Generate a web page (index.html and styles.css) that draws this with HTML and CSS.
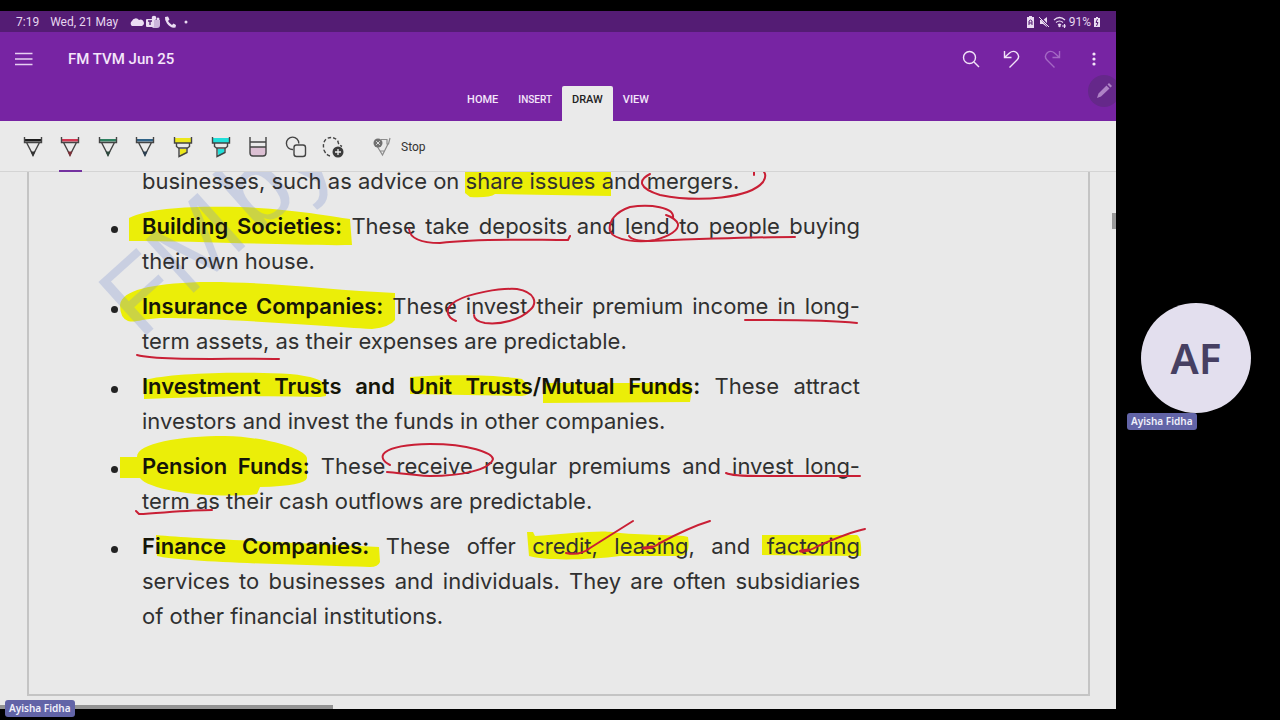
FILE: index.html
```html
<!DOCTYPE html>
<html lang="en">
<head>
<meta charset="utf-8">
<title>FM TVM Jun 25</title>
<link rel="stylesheet" href="styles.css">
</head>
<body>
<div class="meeting">
  <main class="share">
    <div class="status">
      <span>7:19</span><span class="date">Wed, 21 May</span>
      <svg class="status-left" viewBox="0 0 62 14" width="62" height="14" aria-hidden="true">
        <path d="M3 11a3 3 0 0 1 0-5 4 4 0 0 1 7-1 3 3 0 0 1 3 6Z" fill="#eadcf2"/>
        <circle cx="25" cy="3" r="2.3" fill="#eadcf2"/><circle cx="29" cy="4" r="1.5" fill="#eadcf2"/>
        <path d="M22 5h9v5a3 3 0 0 1-3 3h-4l-2-2Z" fill="#cdb6dc"/>
        <rect x="17" y="4" width="8" height="8" rx="1" fill="#eadcf2"/><path d="M19 6h4M21 6v4" stroke="#541c74" stroke-width="1.3"/>
        <path d="M36 2l3-.5 1.5 3-1.5 1.5q1.500 2.500 4 4l1.500-1.500 2.500 1.500-.5 2.500q-5 1-8.500-4Q35.500 5 36 2Z" fill="#eadcf2"/>
        <circle cx="57" cy="7" r="1.500" fill="#eadcf2"/>
      </svg>
      <span class="battery">
        <svg viewBox="0 0 42 14" width="42" height="14" aria-hidden="true">
          <path d="M2 2h2V1h3v1h2v11H2Z" fill="#eadcf2"/><path d="M4 10V6l1.500-1L7 6v4M4 8h3" stroke="#541c74" fill="none"/>
          <path d="M15 5h3l4-3v10l-4-3h-3Z" fill="#eadcf2"/><path d="M15 2l9 10" stroke="#541c74" stroke-width="2"/><path d="M14 2l10 10" stroke="#eadcf2"/>
          <g fill="none" stroke="#eadcf2" stroke-width="1.200"><path d="M29 5q5.500-5 11 0M31 7.500q3.500-3 7 0M33 10q1.500-1.500 3 0"/><path d="M37 11h4M39.500 9v4"/></g><circle cx="34.500" cy="11" r="1.200" fill="#eadcf2"/>
        </svg>
        <span>91%</span>
        <svg viewBox="0 0 8 12" width="8" height="12" aria-hidden="true"><path d="M1 2h2V1h2v1h2v9H1Z" fill="#eadcf2"/><path d="M4.500 3L3 6.500h2L3.500 10" stroke="#541c74" fill="none"/></svg>
      </span>
    </div>
    <header class="header">
      <div class="titlebar">
        <button class="icon-btn menu" aria-label="Menu"><svg viewBox="0 0 18 14" width="18" height="14"><path d="M0 1.500h17.500M0 7h17.500M0 12.500h17.500" stroke="#e7cff2" stroke-width="1.300"/></svg></button>
        <h1>FM TVM Jun 25</h1>
        <div class="actions">
          <button class="icon-btn" aria-label="Search"><svg viewBox="0 0 18 18" width="18" height="18"><g fill="none" stroke="#f2e4f8" stroke-width="1.400"><circle cx="7.500" cy="7.500" r="6"/><path d="M12 12l5 5"/></g></svg></button>
          <button class="icon-btn" aria-label="Undo"><svg viewBox="0 0 18 18" width="18" height="18"><path d="M1.500 1v6.500h7M1.500 7.500L6.500 3Q10 0 13.500 2.500q4 4 .5 7.500L6.500 17.500" fill="none" stroke="#f2e4f8" stroke-width="1.400"/></svg></button>
          <button class="icon-btn" aria-label="Redo" disabled><svg viewBox="0 0 18 18" width="18" height="18"><path d="M15.500 1v6.500h-7M15.500 7.500L10.500 3Q7 0 3.500 2.500q-4 4-.5 7.500l7.500 7.500" fill="none" stroke="#a468c4" stroke-width="1.400"/></svg></button>
          <button class="icon-btn" aria-label="More"><svg viewBox="0 0 18 18" width="18" height="18"><g fill="#f2e4f8"><circle cx="9" cy="4" r="1.600"/><circle cx="9" cy="9" r="1.600"/><circle cx="9" cy="14" r="1.600"/></g></svg></button>
        </div>
      </div>
      <nav class="tabs">
        <button>HOME</button><button class="small">INSERT</button><button class="active">DRAW</button><button>VIEW</button>
      </nav>
      <button class="float-pen" aria-label="Pen menu"><svg viewBox="0 0 18 18" width="18" height="18"><path d="M2 16l1.500-4.500L11.500 3.500l3 3L6 14.500ZM12.500 2.500L14 1l3 3-1.500 1.500Z" fill="#ae83c6"/></svg></button>
    </header>
    <div class="toolbar">
      <div class="tools">
        <button aria-label="Black pen"><svg class="tool" viewBox="0 0 20 22"><path d="M2 3h16v2.500H2Z" fill="#1c1c1c"/><g fill="none" stroke="#444" stroke-width="1.400"><path d="M1.500 1v5.500h17V1M3.500 6.500L10 19l6.500-12.500"/></g><path d="M7.500 15.500h5L10 21Z" fill="#333"/></svg></button>
        <button class="selected" aria-label="Red pen"><svg class="tool" viewBox="0 0 20 22"><path d="M2 3h16v2.500H2Z" fill="#d23852"/><g fill="none" stroke="#444" stroke-width="1.400"><path d="M1.500 1v5.500h17V1M3.500 6.500L10 19l6.500-12.500"/></g><path d="M7.500 15.500h5L10 21Z" fill="#7d3038"/></svg></button>
        <button aria-label="Green pen"><svg class="tool" viewBox="0 0 20 22"><path d="M2 3h16v2.500H2Z" fill="#2e8061"/><g fill="none" stroke="#444" stroke-width="1.400"><path d="M1.500 1v5.500h17V1M3.500 6.500L10 19l6.500-12.500"/></g><path d="M7.500 15.500h5L10 21Z" fill="#2d4a3e"/></svg></button>
        <button aria-label="Blue pen"><svg class="tool" viewBox="0 0 20 22"><path d="M2 3h16v2.500H2Z" fill="#2f6287"/><g fill="none" stroke="#444" stroke-width="1.400"><path d="M1.500 1v5.500h17V1M3.500 6.500L10 19l6.500-12.500"/></g><path d="M7.500 15.500h5L10 21Z" fill="#2c4052"/></svg></button>
        <button aria-label="Yellow highlighter"><svg class="tool" viewBox="0 0 20 22"><path d="M2 2h16v5H2ZM6.500 13h7v4l-6 3.500Z" fill="#ece71b"/><path d="M1.500 1v6h17V1M3.500 7v3.500l2 1.500h9l2-1.500V7M6 12v8.500l8-4V12" fill="none" stroke="#444" stroke-width="1.400"/></svg></button>
        <button aria-label="Cyan highlighter"><svg class="tool" viewBox="0 0 20 22"><path d="M2 2h16v5H2ZM6.500 13h7v4l-6 3.500Z" fill="#21dfd9"/><path d="M1.500 1v6h17V1M3.500 7v3.500l2 1.500h9l2-1.500V7M6 12v8.500l8-4V12" fill="none" stroke="#444" stroke-width="1.400"/></svg></button>
        <button aria-label="Eraser"><svg class="tool" viewBox="0 0 20 22"><path d="M2 11h16v6q0 3-3 3H5q-3 0-3-3Z" fill="#dcc0d3"/><path d="M2 1v16q0 3 3 3h10q3 0 3-3V1M2 6h16M2 11h16" fill="none" stroke="#444" stroke-width="1.400"/></svg></button>
        <button aria-label="Shapes"><svg class="tool" viewBox="0 0 20 22"><g fill="none" stroke="#444" stroke-width="1.400"><path d="M7 13.500A6.200 6.200 0 1 1 12.800 7.500"/><rect x="8" y="9" width="11.500" height="11.500" rx="2.500"/></g></svg></button>
        <button aria-label="Lasso select"><svg class="tool" viewBox="0 0 20 22"><path d="M7 20Q3 19 1 14-1 6 4 2.500q7-3 11 3 0 3 4 5" fill="none" stroke="#444" stroke-width="1.400" stroke-dasharray="3.500 2"/><circle cx="15" cy="16" r="5.500" fill="#3c3c3c"/><path d="M15 13v6M12 16h6" stroke="#eee" stroke-width="1.300"/></svg></button>
      </div>
      <button class="stop"><svg viewBox="0 0 18 20" width="18" height="20" aria-hidden="true"><path d="M8 2.500h6V7h1.500l1.500-6M4 9l5.500 9L15 7M7.500 14h4" fill="none" stroke="#8b8b8b" stroke-width="1.200"/><circle cx="5" cy="6" r="4.500" fill="#707070"/><path d="M3.200 4.200l3.600 3.600M6.800 4.200L3.200 7.800" stroke="#ddd"/></svg>Stop</button>
    </div>
    <section class="canvas">
      <article class="page">
        <svg class="ink" viewBox="27 172 1062 537" width="1062" height="537" aria-hidden="true">
          <g class="highlight">
            <path d="M129 218C150 207 200 206 240 207 290 209 330 216 350 219L352 245C300 246 200 241 129 241Z"/>
            <path d="M120 305C122 290 150 284 200 282 260 281 330 290 395 293V320Q390 327 372 329C320 326 220 318 160 318 140 319 136 323 128 321Q120 318 120 305Z"/>
            <path d="M465 172H611V196L495 194Q490 198 470 197L465 193Z"/>
            <path d="M144 380C170 373 240 371 290 374Q322 377 326 386V396L320 397C260 395 200 397 144 399Z"/>
            <path d="M410 377C450 374 500 375 522 379L532 390Q530 395 522 396L410 394Z"/>
            <path d="M543 383H688L692 388 690 402 543 403Z"/>
            <path d="M120 457H137C137 443 180 436 225 436 270 437 306 450 307 458V478Q305 486 260 487L257 494C220 499 150 492 140 478H120Z"/>
            <path d="M156 535C200 539 300 543 379 547L380 562Q378 567 370 567C300 565 180 562 157 556Z"/>
            <path d="M527 532H533L535 536C560 534 600 530 612 532 640 536 680 534 688 537Q691 555 680 556L620 556C590 560 545 561 529 556Z"/>
            <path d="M762 535H857Q862 538 861 556L762 555Z"/>
          </g>
          <g class="watermark" transform="translate(140 341) rotate(-42)"><text>FM</text><text x="158">by</text></g>
        </svg>
        <ul class="notes">
          <li class="cont"><span class="last">businesses, such as advice on share issues and mergers.</span></li>
          <li><span class="line"><b>Building Societies:</b> These take deposits and lend to people buying</span> <span class="last">their own house.</span></li>
          <li><span class="line"><b>Insurance Companies:</b> These invest their premium income in long-</span><span class="last">term assets, as their expenses are predictable.</span></li>
          <li><span class="line"><b>Investment Trusts and Unit Trusts/Mutual Funds:</b> These attract</span> <span class="last">investors and invest the funds in other companies.</span></li>
          <li><span class="line"><b>Pension Funds:</b> These receive regular premiums and invest long-</span><span class="last">term as their cash outflows are predictable.</span></li>
          <li><span class="line"><b>Finance Companies:</b> These offer credit, leasing, and factoring</span> <span class="line">services to businesses and individuals. They are often subsidiaries</span> <span class="last">of other financial institutions.</span></li>
        </ul>
        <svg class="ink" viewBox="27 172 1062 537" width="1062" height="537" aria-hidden="true">
          <g class="red">
            <path d="M650 174C638 180 638 188 660 195 700 203 750 198 763 182Q767 176 764 172M754 172v3"/>
            <path d="M409 229C410 238 420 243 440 243 480 238 530 240 568 240L570 236"/>
            <path d="M673 218C675 207 650 204 630 207 615 212 608 222 610 231 614 241 640 243 655 240 670 236 679 230 678 224 676 219 672 217 666 215"/>
            <path d="M629 236Q632 241 650 241C700 239 750 237 795 237"/>
            <path d="M456 321C446 317 444 308 456 301 470 293 500 288 517 289 535 292 538 303 530 310 520 320 500 325 485 323Q474 321 474 315"/>
            <path d="M745 320C770 320 820 319 857 323M137 355C160 361 230 358 279 359"/>
            <path d="M390 465C376 458 378 445 430 444 470 444 492 453 493 459 490 470 460 476 430 476 410 475 400 473 387 472"/>
            <path d="M726 473Q732 476 760 476H860M136 511l3 3C160 513 190 510 212 510"/>
            <path d="M566 553Q580 556 590 548L633 521M643 548Q650 550 660 543 690 527 710 521M800 551Q806 553 818 546 850 532 865 529"/>
            <path d="M644 548l8-1M801 551l7-1" stroke-width="3"/>
          </g>
        </svg>
      </article>
      <div class="vthumb"></div>
      <div class="hthumb"></div>
    </section>
    <span class="name presenter">Ayisha Fidha</span>
  </main>
  <aside class="people">
    <div class="person"><div class="avatar">AF</div><span class="name">Ayisha Fidha</span></div>
  </aside>
</div>
</body>
</html>
```
FILE: styles.css
```css
* { box-sizing: border-box; }
body { margin: 0; background: #000; font-family: Roboto, "Liberation Sans", sans-serif; }
button { border: 0; padding: 0; margin: 0; background: none; font: inherit; color: inherit; }
svg { display: block; flex: none; }

.meeting { display: grid; grid-template-columns: 1fr 164px; min-height: 100vh; }
.share { position: relative; display: flex; flex-direction: column; min-width: 0; padding: 11px 0; }

.status { display: flex; align-items: center; height: 21px; padding: 0 15px 0 16px; background: #541c74; color: #e6d6ef; font-size: 12px; }
.date { margin-left: 11px; }
.status-left { margin-left: 11px; }
.battery { display: flex; align-items: center; gap: 2px; margin-left: auto; }

.header { position: relative; display: flex; flex-direction: column; height: 89px; overflow: hidden; background: #7724a3; color: #f4e6fa; }
.titlebar { display: flex; align-items: center; height: 54px; padding: 0 7px 0 9px; }
.icon-btn { display: grid; place-items: center; width: 30px; height: 30px; }
.titlebar h1 { margin: 0 0 0 29px; font-size: 15px; line-height: 20px; font-weight: 500; }
.actions { display: flex; gap: 11px; margin-left: auto; }
.menu { flex: none; }
.tabs { display: flex; justify-content: center; height: 35px; }
.tabs button { padding: 0 10px 8px; font-size: 11px; font-weight: 500; }
.tabs .small { font-size: 10px; }
.tabs .active { border-radius: 2px 2px 0 0; background: #eaeaea; color: #222; }
.float-pen { position: absolute; right: -4px; top: 43px; display: grid; place-items: center; width: 32px; height: 32px; border-radius: 50%; background: #65288a; }

.toolbar { display: flex; height: 51px; padding: 2px 0 0 14px; background: #eaeaea; border-bottom: 1px solid #d4d4d4; color: #333; }
.tools { display: grid; grid-template-columns: repeat(9, 1fr); width: 338px; }
.tools button { position: relative; display: grid; place-items: center; }
.tools .selected::after { content: ""; position: absolute; left: 7px; right: 7px; bottom: -1px; height: 2px; background: #7432a0; }
.tool { width: 20px; height: 22px; overflow: visible; }
.stop { display: flex; align-items: center; gap: 10px; margin-left: 21px; font-size: 12px; }

.canvas { position: relative; display: flex; flex: 1; flex-direction: column; overflow: hidden; padding: 0 26px 13px 27px; background: #e9e9e9; }
.page { position: relative; flex: 1; border: 2px solid #c4c4c4; border-top: 0; padding: 0 228px 60px 113px; }
.ink { position: absolute; left: -2px; top: 0; }
.highlight { fill: #ebee08; }
.watermark { font: 104px "Liberation Sans Narrow", "Liberation Sans", sans-serif; fill: #8296d2; fill-opacity: .3; }
.red { fill: none; stroke: #c91f35; stroke-width: 2; stroke-linecap: round; stroke-linejoin: round; }
.notes { position: relative; display: flex; flex-direction: column; gap: 10px; margin: -8px 0 0; padding: 0; list-style: none; color: #303030; font: 22px/35px Inter, "Open Sans", sans-serif; }
.notes li { position: relative; }
.notes li::before { content: ""; position: absolute; left: -31px; top: 17px; width: 7px; height: 7px; border-radius: 50%; background: #222; }
.notes .cont::before { display: none; }
.notes b { color: #151508; font-weight: 600; }
.line, .last { display: block; white-space: nowrap; }
.line { text-align: justify; text-align-last: justify; white-space: normal; }
.vthumb { position: absolute; right: 0; top: 41px; width: 4px; height: 16px; background: #999; }
.hthumb { position: absolute; left: 0; bottom: 0; width: 333px; height: 4px; background: #949494; }

.name { padding: 0 4px; border-radius: 3px; background: #6264a7; color: #f0f0fa; font: 600 10px/17px "Noto Sans", "Open Sans", sans-serif; white-space: nowrap; }
.presenter { position: absolute; left: 5px; bottom: 3px; }
.people { display: flex; align-items: center; justify-content: center; padding: 0 4px 4px 0; }
.person { position: relative; }
.person .name { position: absolute; left: -14px; bottom: -17px; }
.avatar { display: grid; place-items: center; width: 110px; height: 110px; border-radius: 50%; background: #e3dfee; color: #463f62; font: 600 42px/50px "Noto Sans", "Open Sans", sans-serif; }
```
